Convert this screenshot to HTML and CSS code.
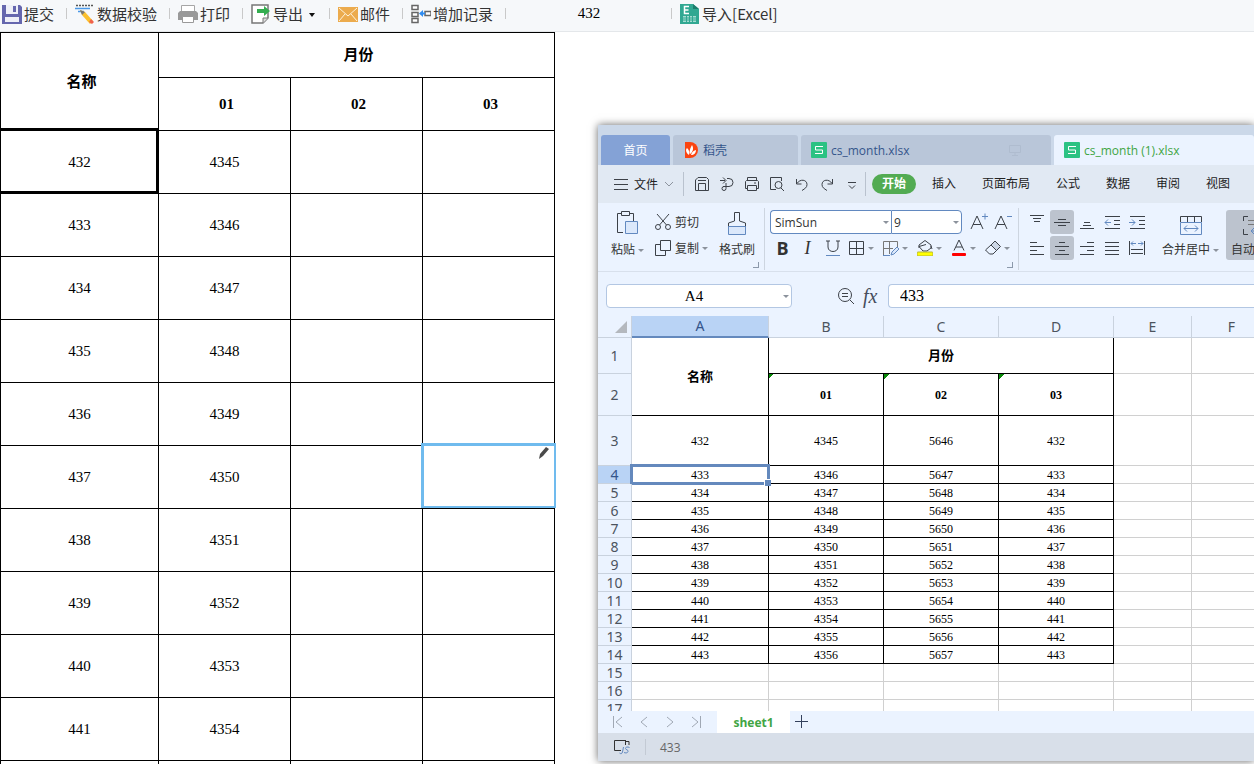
FILE: index.html
```html
<!DOCTYPE html>
<html lang="zh-CN">
<head>
    <meta charset="UTF-8">
    <meta name="viewport" content="width=device-width, initial-scale=1.0">
    <title>数据填报</title>
    <link rel="stylesheet" href="styles.css">
</head>
<body>

    <div class="toolbar">
        <button class="tool first">
            <svg width="20" height="20" viewBox="0 0 20 20"><path d="M0 1h18l2 2v17H0z" fill="#6567ae"/><path d="M4 1h12v9H4z" fill="#eef0f8"/><path d="M11 2h3v6h-3z" fill="#6567ae"/><path d="M3 13h14v5H3z" fill="#eef0f8"/></svg>
            提交
        </button>
        <button class="tool">
            <svg width="20" height="20" viewBox="0 0 20 20"><path d="M1 1.500h18" stroke="#555" stroke-width="1.500" stroke-dasharray="2 1"/><path d="M0 4.500h15M3 7.500h6" stroke="#4a98e8" stroke-width="1.500"/><path d="M5 6l5 2 8 9-3 3-8-9z" fill="#fbc02d"/><path d="M5 6l5 2-3 3z" fill="#777"/><path d="M16 15l3 3-2 2-3-2z" fill="#f0624d"/></svg>
            数据校验
        </button>
        <button class="tool">
            <svg width="20" height="20" viewBox="0 0 20 20"><path d="M3.500 8V1.500h13V8" fill="#fff" stroke="#a6a6a6"/><path d="M2 7h16l2 2v7H0V9z" fill="#999"/><path d="M4.500 12.500h11v6h-11z" fill="#fff" stroke="#999"/></svg>
            打印
        </button>
        <button class="tool">
            <svg width="20" height="20" viewBox="0 0 20 20"><path d="M1 1h16v13l-5 5H1z" fill="#fff" stroke="#777" stroke-width="1.500"/><path d="M12 19v-5h5" fill="#ddd" stroke="#777"/><path d="M6 5h7V2l6 5-6 5V9H6z" fill="#34ad50"/></svg>
            导出
            <span class="caret"></span>
        </button>
        <button class="tool">
            <svg width="20" height="20" viewBox="0 0 20 20"><path d="M0 3h20v15H0z" fill="#ecab4d"/><path d="M1 4l9 8 9-8M1 17l6-7M19 17l-6-7" fill="none" stroke="#fff3dc"/></svg>
            邮件
        </button>
        <button class="tool">
            <svg width="20" height="20" viewBox="0 0 20 20"><path d="M1 1.500h6v4H1zM1 8.500h6v4H1zM1 14.500h6v4H1zM14 7.500h6v4h-6z" fill="#fff" stroke="#666" stroke-width="1.500"/><path d="M14 9.500H10" stroke="#2f8cf0" stroke-width="2"/><path d="M12 6v7L8 9.500z" fill="#2f8cf0"/></svg>
            增加记录
        </button>
        <input class="tool-input" type="text" value="432" aria-label="名称">
        <button class="tool last">
            <svg width="20" height="20" viewBox="0 0 20 20"><path d="M0 0h13l6 5v15H0z" fill="#31a892"/><path d="M13 0l6 5h-6z" fill="#1c7d6c"/><path d="M9 2.500H4.500v7H9M4.500 6H8.500" fill="none" stroke="#fff" stroke-width="1.500"/><path d="M3 12h13v6H3z" fill="#a5dcd1"/><path d="M3 14h13M3 16h13M6.500 12v6M9.500 12v6M12.500 12v6" stroke="#31a892"/></svg>
            导入[Excel]
        </button>
    </div>

    <div class="main">
        <!-- report form -->
        <table class="report">
            <colgroup><col class="name-col"><col><col><col></colgroup>
            <tr class="month-row"><th rowspan="2">名称</th><th colspan="3">月份</th></tr>
            <tr class="no-row"><th>01</th><th>02</th><th>03</th></tr>
            <tr><td class="current">432</td><td>4345</td><td></td><td></td></tr>
            <tr><td>433</td><td>4346</td><td></td><td></td></tr>
            <tr><td>434</td><td>4347</td><td></td><td></td></tr>
            <tr><td>435</td><td>4348</td><td></td><td></td></tr>
            <tr><td>436</td><td>4349</td><td></td><td></td></tr>
            <tr><td>437</td><td>4350</td><td></td><td class="hovered"><svg class="pencil" width="12" height="14" viewBox="0 0 12 14"><path d="M1 13l1-5 6-7 3 2-6 7z" fill="#4a4a4a"/></svg></td></tr>
            <tr><td>438</td><td>4351</td><td></td><td></td></tr>
            <tr><td>439</td><td>4352</td><td></td><td></td></tr>
            <tr><td>440</td><td>4353</td><td></td><td></td></tr>
            <tr><td>441</td><td>4354</td><td></td><td></td></tr>
            <tr><td></td><td></td><td></td><td></td></tr>
        </table>

        <!-- spreadsheet window -->
        <div class="window">
            <div class="titlebar">
                <button class="tab home">首页</button>
                <button class="tab docer">
                    <svg width="16" height="16" viewBox="0 0 16 16"><path d="M2 0h5a8 8 0 0 1 0 16H2z" fill="#fb4410"/><path d="M6 13C2 10 3 7 4 6c2 2 3 4 2 7zM7 12C6 8 8 5 9 3c2 3 1 7-2 9zM8 13c1-3 2-4 5-5 0 3-2 5-5 5z" fill="#fff"/></svg>
                    稻壳
                </button>
                <button class="tab file">
                    <svg width="16" height="16" viewBox="0 0 16 16"><rect width="16" height="16" rx="1" fill="#2bc283"/><path class="logo-s" d="M12 4.500H4.500V8h7v3.500H4"/></svg>
                    cs_month.xlsx
                    <svg class="screen" width="12" height="12" viewBox="0 0 12 12"><path d="M.5 1.500h11v7H.5zM6 9v2M3 11.500h6"/></svg>
                </button>
                <button class="tab active">
                    <svg width="16" height="16" viewBox="0 0 16 16"><rect width="16" height="16" rx="1" fill="#2bc283"/><path class="logo-s" d="M12 4.500H4.500V8h7v3.500H4"/></svg>
                    cs_month (1).xlsx
                </button>
            </div>

            <div class="menubar">
                <button class="file-menu">
                    <svg width="14" height="12" viewBox="0 0 14 12"><path d="M0 1.500h14M0 6.500h14M0 11.500h14"/></svg>
                    文件
                    <svg class="soft" width="10" height="6" viewBox="0 0 10 6"><path d="M1 1l4 4 4-4"/></svg>
                </button>
                <div class="quick">
                    <button aria-label="保存"><svg width="16" height="16" viewBox="0 0 16 16"><path d="M4 1.500h8.500l2 2V14.500h-13V4zM4.500 14V7.500h7V14M4 4.500h8"/></svg></button>
                    <button aria-label="输出"><svg width="16" height="16" viewBox="0 0 16 16"><path d="M1 4.500h5M4 1.500l3 3-3 3M8 2.500h2a4 4 0 0 1 0 8H4M7 7v5.500a2 2 0 0 1-4 0 2 2 0 0 1 2-2"/></svg></button>
                    <button aria-label="打印"><svg width="16" height="16" viewBox="0 0 16 16"><path d="M3.500 5V1.500h9V5M3.500 12.500h-2v-7l1-1h11l1 1v7h-2M3.500 9.500h9v5h-9zM10 7h2"/></svg></button>
                    <button aria-label="预览"><svg width="16" height="16" viewBox="0 0 16 16"><path d="M7 13.500H1.500v-12h11V5M12 12l3 3"/><circle cx="9.500" cy="9" r="3.500"/></svg></button>
                    <button aria-label="撤销"><svg width="16" height="16" viewBox="0 0 16 16"><path d="M2.500 3v5h5M3 7.500c3-5 10-4 10 1 0 3-2 4-5 6"/></svg></button>
                    <button aria-label="恢复"><svg width="16" height="16" viewBox="0 0 16 16"><path d="M13.500 3v5h-5M13 7.500c-3-5-10-4-10 1 0 3 2 4 5 6"/></svg></button>
                    <button aria-label="更多"><svg width="16" height="16" viewBox="0 0 16 16"><path d="M4 6.500h8M5 9.500l3 3 3-3"/></svg></button>
                </div>
                <nav class="menus">
                    <a class="start" href="#">开始</a>
                    <a href="#">插入</a>
                    <a href="#">页面布局</a>
                    <a href="#">公式</a>
                    <a href="#">数据</a>
                    <a href="#">审阅</a>
                    <a href="#">视图</a>
                </nav>
            </div>

            <div class="ribbon">
                <div class="group clipboard">
                    <button class="big">
                        <svg width="24" height="26" viewBox="0 0 24 26"><path d="M7 22.500H1.500v-19H5M13 3.500h4.500V11M5.500 1.500h8v4h-8z"/><path d="M9.500 11.500h12v12h-12z" fill="#dbe8fb" stroke="#6289c0"/></svg>
                        <span class="label">粘贴<i class="arrow"></i></span>
                    </button>
                    <div class="stack">
                        <button class="small"><svg width="16" height="16" viewBox="0 0 16 16"><path d="M2 0l9.500 11M14 0L4.500 11"/><circle cx="3" cy="13" r="2.500"/><circle cx="13" cy="13" r="2.500"/></svg>剪切</button>
                        <button class="small"><svg width="16" height="16" viewBox="0 0 16 16"><path d="M5.500.500h10v10h-10zM5 4.500H.500v11h10V11"/></svg>复制<i class="arrow"></i></button>
                    </div>
                    <button class="big">
                        <svg width="24" height="26" viewBox="0 0 24 26"><path d="M3.500 17v-4l6-2v-8.500h5V11l6 2v4"/><path d="M3.500 16.500h17v8h-17z" fill="#dbe8fb" stroke="#6289c0"/></svg>
                        <span class="label">格式刷</span>
                    </button>
                </div>
                <div class="group font">
                    <div class="font-row">
                        <span class="combo family"><select aria-label="字体"><option>SimSun</option></select></span>
                        <span class="combo size"><select aria-label="字号"><option>9</option></select></span>
                        <button aria-label="增大字号"><svg width="18" height="18" viewBox="0 0 18 18"><path d="M1 16L7 3l6 13M3 11.500h8"/><path d="M12 3.500h6M15 .500v6" stroke="#6289c0"/></svg></button>
                        <button aria-label="减小字号"><svg width="18" height="18" viewBox="0 0 18 18"><path d="M1 16L7 3l6 13M3 11.500h8"/><path d="M13 3.500h5" stroke="#6289c0"/></svg></button>
                    </div>
                    <div class="font-row">
                        <button class="fmt bold">B</button>
                        <button class="fmt italic">I</button>
                        <button class="fmt" aria-label="下划线"><svg width="16" height="16" viewBox="0 0 16 16"><path d="M1 1h4M11 1h4M3 1v6c0 6 10 6 10 0V1"/><path d="M1 15.500h14" stroke="#6289c0"/></svg></button>
                        <button class="drop" aria-label="边框"><svg width="16" height="16" viewBox="0 0 16 16"><path d="M.500 1.500h14v13H.500zM7.500 1.500v13M.500 8.500h14"/></svg><i class="arrow"></i></button>
                        <button class="drop" aria-label="绘图边框"><svg width="16" height="16" viewBox="0 0 16 16"><path d="M.500 15V1.500h14V7M1 8.500h9M6.500 1.500V14" stroke="#777"/><path d="M8 15l1-3 5-5 2 2-5 5zM0 15.500h7" fill="#dbe8fb" stroke="#6289c0"/></svg><i class="arrow"></i></button>
                        <button class="drop" aria-label="填充颜色"><svg width="16" height="16" viewBox="0 0 16 16"><path d="M2 8V5l6-4.500 6 4.500v3l-4 3H6L2 6.500l7-2M14 6l1 3"/><rect x="0" y="12" width="16" height="4" rx="1" fill="#ff0" stroke="#b5b53c"/></svg><i class="arrow"></i></button>
                        <button class="drop" aria-label="字体颜色"><svg width="16" height="16" viewBox="0 0 16 16"><path d="M3 10.500L8 0l5 10.500M5 7h6"/><rect x="1" y="13" width="14" height="3" rx="1" fill="#f00" stroke="none"/></svg><i class="arrow"></i></button>
                        <button class="drop" aria-label="清除"><svg width="16" height="16" viewBox="0 0 16 16"><path d="M6 5l4-4 5.500 5.500-4 4z" fill="#ccd6e5"/><path d="M6 5L.500 10l4 4h3.500l3.500-3.500M6 5l5.500 5.500"/></svg><i class="arrow"></i></button>
                    </div>
                </div>
                <div class="group align">
                    <div class="align-grid">
                        <button aria-label="顶端对齐"><svg width="16" height="16" viewBox="0 0 16 16"><path d="M1 1.500h14M4 4.500h8M5 7.500h6"/></svg></button>
                        <button class="on" aria-label="垂直居中"><svg width="16" height="16" viewBox="0 0 16 16"><path d="M4 5.500h8M0 8.500h16M4 11.500h8"/></svg></button>
                        <button aria-label="底端对齐"><svg width="16" height="16" viewBox="0 0 16 16"><path d="M5 8.500h6M4 11.500h8M1 14.500h14"/></svg></button>
                        <button aria-label="减少缩进"><svg width="16" height="16" viewBox="0 0 16 16"><path d="M1 2.500h15M10 6.500h6M10 10.500h6M1 14.500h15"/><path d="M7 8.500H1M4 5.500l-3 3 3 3" stroke="#6289c0"/></svg></button>
                        <button aria-label="增加缩进"><svg width="16" height="16" viewBox="0 0 16 16"><path d="M1 2.500h15M10 6.500h6M10 10.500h6M1 14.500h15"/><path d="M0 8.500h6M3 5.500l3 3-3 3" stroke="#6289c0"/></svg></button>
                        <button aria-label="左对齐"><svg width="16" height="16" viewBox="0 0 16 16"><path d="M1 2.500h7M1 6.500h14M1 10.500h7M1 14.500h14"/></svg></button>
                        <button class="on" aria-label="水平居中"><svg width="16" height="16" viewBox="0 0 16 16"><path d="M5 2.500h6M1 6.500h14M5 10.500h6M1 14.500h14"/></svg></button>
                        <button aria-label="右对齐"><svg width="16" height="16" viewBox="0 0 16 16"><path d="M8 2.500h7M1 6.500h14M8 10.500h7M1 14.500h14"/></svg></button>
                        <button aria-label="两端对齐"><svg width="16" height="16" viewBox="0 0 16 16"><path d="M1 2.500h14M1 6.500h14M1 10.500h14M1 14.500h14"/></svg></button>
                        <button aria-label="分散对齐"><svg width="16" height="16" viewBox="0 0 16 16"><path d="M.500 1v14M15.500 1v14M2 9.500h12M2 13.500h12"/><path d="M7 3.500H2M4 1.500l-2 2 2 2M9 3.500h5M12 1.500l2 2-2 2" stroke="#6289c0"/></svg></button>
                    </div>
                    <button class="big merge">
                        <svg width="24" height="26" viewBox="0 0 24 26"><path d="M1.500 12V6.500h21V12M8.500 6.500v6M15.500 6.500v6"/><path d="M1.500 12.500h21v12h-21zM5 18.500h14M8 15.500l-3 3 3 3M16 15.500l3 3-3 3" stroke="#6289c0"/></svg>
                        <span class="label">合并居中<i class="arrow"></i></span>
                    </button>
                    <button class="big wrap on">
                        <svg width="24" height="26" viewBox="0 0 24 26"><path d="M5 6.500H.500V11M18 6.500h4.500V11M.500 19v5.500H5M22.500 19v5.500H18"/><path d="M5 10.500h13M5 14.500h13" stroke="#777"/><path d="M18 18v3h-9M11 18l-3 3 3 3" stroke="#6289c0"/></svg>
                        <span class="label">自动换行</span>
                    </button>
                </div>
            </div>

            <div class="formula">
                <span class="combo name-box"><input type="text" value="A4" aria-label="名称框"></span>
                <svg width="18" height="18" viewBox="0 0 18 18"><circle cx="8" cy="8" r="6.500"/><path d="M5 6.500h6M5 9.500h6M13 13l4 4"/></svg>
                <em class="fx">fx</em>
                <input class="formula-input" type="text" value="433" aria-label="编辑栏">
            </div>

            <div class="sheet">
                <table class="grid">
                    <colgroup><col class="c-head"><col class="c-a"><col class="c-m"><col class="c-m"><col class="c-m"><col class="c-e"><col class="c-f"></colgroup>
                    <tr class="letters"><th class="corner"></th><th class="sel">A</th><th>B</th><th>C</th><th>D</th><th>E</th><th>F</th></tr>
                    <tr class="r1 data"><th>1</th><td rowspan="2" class="title">名称</td><td colspan="3" class="title">月份</td><td></td><td></td></tr>
                    <tr class="r2 data"><th>2</th><td class="text">01</td><td class="text">02</td><td class="text">03</td><td></td><td></td></tr>
                    <tr class="r3 data"><th>3</th><td>432</td><td>4345</td><td>5646</td><td>432</td><td></td><td></td></tr>
                    <tr class="data"><th class="sel">4</th><td class="cursor">433</td><td>4346</td><td>5647</td><td>433</td><td></td><td></td></tr>
                    <tr class="data"><th>5</th><td>434</td><td>4347</td><td>5648</td><td>434</td><td></td><td></td></tr>
                    <tr class="data"><th>6</th><td>435</td><td>4348</td><td>5649</td><td>435</td><td></td><td></td></tr>
                    <tr class="data"><th>7</th><td>436</td><td>4349</td><td>5650</td><td>436</td><td></td><td></td></tr>
                    <tr class="data"><th>8</th><td>437</td><td>4350</td><td>5651</td><td>437</td><td></td><td></td></tr>
                    <tr class="data"><th>9</th><td>438</td><td>4351</td><td>5652</td><td>438</td><td></td><td></td></tr>
                    <tr class="data"><th>10</th><td>439</td><td>4352</td><td>5653</td><td>439</td><td></td><td></td></tr>
                    <tr class="data"><th>11</th><td>440</td><td>4353</td><td>5654</td><td>440</td><td></td><td></td></tr>
                    <tr class="data"><th>12</th><td>441</td><td>4354</td><td>5655</td><td>441</td><td></td><td></td></tr>
                    <tr class="data"><th>13</th><td>442</td><td>4355</td><td>5656</td><td>442</td><td></td><td></td></tr>
                    <tr class="data"><th>14</th><td>443</td><td>4356</td><td>5657</td><td>443</td><td></td><td></td></tr>
                    <tr><th>15</th><td></td><td></td><td></td><td></td><td></td><td></td></tr>
                    <tr><th>16</th><td></td><td></td><td></td><td></td><td></td><td></td></tr>
                    <tr><th>17</th><td></td><td></td><td></td><td></td><td></td><td></td></tr>
                </table>
            </div>

            <div class="sheet-tabs">
                <button aria-label="第一个"><svg width="12" height="12" viewBox="0 0 12 12"><path d="M1.500 0v12M10 1L4 6l6 5"/></svg></button>
                <button aria-label="上一个"><svg width="12" height="12" viewBox="0 0 12 12"><path d="M9 1L3 6l6 5"/></svg></button>
                <button aria-label="下一个"><svg width="12" height="12" viewBox="0 0 12 12"><path d="M3 1l6 5-6 5"/></svg></button>
                <button aria-label="最后一个"><svg width="12" height="12" viewBox="0 0 12 12"><path d="M10.500 0v12M2 1l6 5-6 5"/></svg></button>
                <button class="sheet-tab">sheet1</button>
                <button class="add" aria-label="新建工作表"><svg width="14" height="14" viewBox="0 0 14 14"><path d="M6.500 0v13M0 6.500h13"/></svg></button>
            </div>

            <div class="status">
                <span class="macro"><svg width="18" height="16" viewBox="0 0 18 16"><path d="M8 11.500H1.500v-10H12M12.500 6V1M12.500 2.500h3.500V6" stroke="#333"/><path d="M10.500 8l-1 5c-.5 2-2 2-3 1M16.500 8.500c-2-1-4-.5-4 1s3 1 2.500 3-3 1.500-4 1" stroke="#6289c0"/></svg></span>
                <span class="value">433</span>
            </div>
        </div>
    </div>

</body>
</html>
```
FILE: styles.css
```css
* {
    box-sizing: border-box;
}
body {
    margin: 0;
    height: 100vh;
    display: flex;
    flex-direction: column;
    overflow: hidden;
    background: #fff;
    color: #333;
    font-family: "Open Sans", "Noto Sans CJK SC", sans-serif;
    font-size: 12px;
}
button, input, select {
    font: inherit;
    color: inherit;
    margin: 0;
    padding: 0;
    border: none;
    background: none;
    outline: none;
}
button {
    display: flex;
    align-items: center;
    white-space: nowrap;
    cursor: pointer;
}
svg {
    flex: none;
}

/* top toolbar */
.toolbar {
    flex: none;
    display: flex;
    align-items: center;
    height: 32px;
    padding-bottom: 4px;
    background: #f6f8fa;
    border-bottom: 1px solid #e4e7ea;
    font-family: "Noto Sans CJK SC", sans-serif;
    font-size: 15px;
}
.tool {
    position: relative;
    gap: 2px;
    padding: 0 12px 0 8px;
    height: 24px;
    margin-right: 1px;
}
.tool.first {
    padding-left: 2px;
}
.tool::after, .tool-input {
    background: linear-gradient(#c9c9c9, #c9c9c9) right center / 1px 11px no-repeat;
}
.tool::after {
    content: "";
    position: absolute;
    right: -1px;
    width: 1px;
    height: 11px;
}
.tool.last::after {
    display: none;
}
.tool-input {
    width: 166px;
    height: 24px;
    text-align: center;
    color: #000;
    font-family: "Liberation Serif", serif;
}
.caret {
    margin: 2px 0 0 4px;
    border: 3px solid transparent;
    border-top: 4px solid #111;
    border-bottom: none;
    margin-right: 2px;
}

.main {
    flex: 1;
    min-height: 0;
    display: flex;
    align-items: flex-start;
    overflow: hidden;
}

/* report */
.report {
    flex: none;
    width: 555px;
    table-layout: fixed;
    border-collapse: separate;
    border-spacing: 0;
    border: 1px solid #000;
    border-width: 1px 0 0 1px;
    color: #000;
    font-family: "Liberation Serif", "Noto Sans CJK SC", serif;
    font-size: 15px;
    line-height: 20px;
    text-align: center;
}
.report .name-col {
    width: 158px;
}
.report td, .report th {
    position: relative;
    height: 63px;
    padding: 0;
    border: 1px solid #000;
    border-width: 0 1px 1px 0;
}
.report th {
    padding-left: 4px;
}
.report .month-row th {
    height: 45px;
}
.report .no-row th {
    height: 53px;
}
.report .current::after, .report .hovered::after {
    content: "";
    position: absolute;
    top: -3px;
    right: -1px;
    bottom: -1px;
    left: -1px;
    border: 3px solid #000;
    border-left-width: 1px;
}
.report .hovered::after {
    right: -2px;
    left: -2px;
    border: 3px solid #70bbee;
    border-width: 3px 2px 2px 3px;
    bottom: 0;
}
.pencil {
    position: absolute;
    top: 0;
    right: 4px;
}

/* window */
.window {
    flex: 1;
    min-width: 0;
    align-self: stretch;
    display: flex;
    flex-direction: column;
    margin: 93px 0 3px 43px;
    background: #ebf3ff;
    box-shadow: 0 0 8px rgba(0, 0, 0, 0.6);
}
.window svg {
    fill: none;
    stroke: #3c4148;
}
.window .titlebar svg {
    stroke: none;
}
.logo-s {
    stroke: #fff;
    stroke-linejoin: round;
}
.titlebar {
    flex: none;
    display: flex;
    align-items: flex-end;
    gap: 3px;
    height: 40px;
    padding-left: 3px;
    background: #cbd8e9;
}
.tab {
    flex: none;
    gap: 4px;
    height: 30px;
    padding-left: 10px;
    border-radius: 3px 3px 0 0;
    background: #b9c6d9;
    color: #34558b;
}
.tab.home {
    width: 69px;
    padding: 0;
    justify-content: center;
    background: #84a2d6;
    color: #fff;
}
.tab.docer {
    width: 125px;
}
.tab.file {
    width: 250px;
}
.tab .screen {
    margin: 0 30px 0 auto;
}
.screen path {
    stroke: #afbccf;
}
.tab.active {
    flex: 1;
    background: #ebf3ff;
    color: #41a544;
}

.menubar {
    flex: none;
    display: flex;
    align-items: center;
    height: 38px;
    padding-left: 16px;
    background: #e1e9f3;
    color: #222;
    overflow: hidden;
}
.file-menu {
    gap: 6px;
    padding-right: 9px;
}
.window .soft {
    stroke: #8d949e;
}
.quick {
    display: flex;
    height: 24px;
    padding: 0 1px 0 5px;
    border: 1px solid #b9c2ce;
    border-width: 0 1px;
}
.quick button {
    width: 25px;
    justify-content: center;
}
.menus {
    display: flex;
    align-items: center;
    gap: 26px;
    padding-left: 16px;
    white-space: nowrap;
    line-height: 20px;
}
.menus a {
    color: inherit;
    text-decoration: none;
}
.menus .start {
    margin: 0 -10px;
    padding: 0 10px;
    border-radius: 10px;
    background: #52ab52;
    color: #fff;
    font-weight: bold;
}

.ribbon {
    flex: none;
    display: flex;
    height: 69px;
    padding-top: 5px;
    overflow: hidden;
    border-bottom: 1px solid #d8e0ec;
}
.group {
    position: relative;
    flex: none;
    display: flex;
    height: 62px;
    padding-top: 2px;
    border-right: 1px solid #cdd5e0;
}
.group.align {
    border: none;
    padding-left: 6px;
}
.clipboard::after, .font::after {
    content: "";
    position: absolute;
    right: 5px;
    bottom: 2px;
    width: 5px;
    height: 5px;
    border: 1px solid #8c99ab;
    border-width: 0 1px 1px 0;
}
.clipboard {
    width: 167px;
    padding-left: 13px;
    gap: 11px;
}
.arrow {
    flex: none;
    margin-left: 3px;
    border: 3px solid transparent;
    border-top-color: #8b929c;
    border-bottom: none;
}
.big {
    flex-direction: column;
    gap: 5px;
    height: 50px;
}
.label {
    display: flex;
    align-items: center;
    line-height: 18px;
}
.stack {
    display: grid;
    grid-template-rows: 24px 24px;
    gap: 2px;
}
.small {
    gap: 4px;
}
.small .arrow {
    margin-left: -1px;
}
.font {
    width: 254px;
    padding-left: 5px;
    flex-direction: column;
    gap: 2px;
}
.font-row {
    display: flex;
    height: 24px;
}
.font-row button {
    width: 24px;
    justify-content: center;
}
.font-row .combo + button {
    margin-left: 5px;
}
.font-row .fmt {
    width: 25px;
    font-size: 18px;
}
.font-row .bold {
    font-weight: bold;
}
.font-row .italic {
    font-family: "Liberation Serif", serif;
    font-style: italic;
}
.font-row .drop {
    width: 34px;
    justify-content: flex-start;
    padding-left: 4px;
}
.combo {
    position: relative;
    flex: none;
    display: flex;
    height: 24px;
    border: 1px solid #6289c0;
    background: #fff;
}
.combo::after {
    content: "";
    position: absolute;
    top: 10px;
    right: 2px;
    border: 3px solid transparent;
    border-top-color: #8b929c;
    border-bottom: none;
    pointer-events: none;
}
.combo select {
    width: 100%;
    appearance: none;
    padding-left: 4px;
}
.family {
    width: 121px;
    border-right: none;
    border-radius: 4px 0 0 4px;
}
.size {
    width: 71px;
    border-radius: 0 4px 4px 0;
}
.size select {
    padding-left: 2px;
}
.align-grid {
    display: grid;
    grid-template-columns: repeat(5, 24px);
    grid-template-rows: 24px 24px;
    gap: 2px 1px;
}
.align-grid button {
    justify-content: center;
}
.on {
    border-radius: 3px;
    background: #bcc3ce;
}
.merge {
    margin-left: 13px;
}
.wrap {
    margin-left: 7px;
    padding: 0 5px;
}

.formula {
    flex: none;
    display: flex;
    align-items: center;
    height: 44px;
    padding: 4px 0 0 8px;
}
.formula > svg {
    margin: 0 8px 0 45px;
}
.name-box {
    width: 186px;
    border-color: #b3c7e3;
    border-radius: 4px;
}
.name-box input {
    width: 100%;
    padding-right: 10px;
    text-align: center;
    color: #000;
    font-family: "Liberation Serif", serif;
    font-size: 15px;
}
.fx {
    width: 25px;
    color: #454d5c;
    font-family: "Liberation Serif", serif;
    font-size: 20px;
    line-height: 20px;
}
.formula-input {
    flex: 1;
    min-width: 0;
    height: 24px;
    padding-left: 11px;
    border: 1px solid #b3c7e3;
    border-right: none;
    border-radius: 4px 0 0 4px;
    background: #fff;
    color: #000;
    font-family: "Liberation Serif", serif;
    font-size: 16px;
}

/* cells */
.sheet {
    flex: 1;
    min-height: 0;
    overflow: hidden;
    background: #fff;
}
.grid {
    width: 674px;
    table-layout: fixed;
    border-collapse: separate;
    border-spacing: 0;
    text-align: center;
}
.c-head {
    width: 34px;
}
.c-a {
    width: 137px;
}
.c-m {
    width: 115px;
}
.c-e {
    width: 78px;
}
.c-f {
    width: 80px;
}
.grid th, .grid td {
    position: relative;
    height: 18px;
    padding: 0;
    border: 1px solid #d0d0d0;
    border-width: 0 1px 1px 0;
    line-height: 16px;
}
.grid th {
    background: #ebf3ff;
    border-color: #c9d2de;
    color: #4c535e;
    font-family: "Noto Sans", sans-serif;
    font-size: 14px;
    font-weight: normal;
}
.grid td {
    color: #000;
    font-family: "Liberation Serif", "Noto Sans CJK SC", serif;
}
.grid .letters th {
    height: 22px;
}
.grid .r1 > * {
    height: 36px;
}
.grid .r2 > * {
    height: 42px;
}
.grid .r3 > * {
    height: 50px;
}
.data td:not(:nth-last-child(-n+2)) {
    border-color: #000;
}
.grid .sel {
    background: #b9d3f5;
    color: #34558b;
}
.grid .letters .sel {
    border-bottom: 2px solid #6489bd;
}
.grid .title {
    font-size: 13px;
    font-weight: bold;
}
.grid .text {
    font-weight: bold;
}
.text::before {
    content: "";
    position: absolute;
    top: 0;
    left: 0;
    width: 5px;
    height: 5px;
    background: linear-gradient(135deg, #0a8a0a 50%, transparent 50%);
}
.corner::after {
    content: "";
    position: absolute;
    right: 4px;
    bottom: 4px;
    border: 6px solid #b4b8be;
    border-top-color: transparent;
    border-left-color: transparent;
}
.cursor::before {
    content: "";
    position: absolute;
    top: -2px;
    right: -2px;
    bottom: -2px;
    left: -2px;
    border: 3px solid #6489bd;
}
.cursor::after {
    content: "";
    position: absolute;
    z-index: 1;
    right: -3px;
    bottom: -3px;
    width: 6px;
    height: 6px;
    border: 1px solid #fff;
    border-width: 1px 0 0 1px;
    background: #6489bd;
}

.sheet-tabs {
    flex: none;
    display: flex;
    height: 22px;
    padding-left: 7px;
}
.sheet-tabs button {
    width: 26px;
    justify-content: center;
}
.sheet-tabs svg {
    stroke: #a0a8b4;
}
.sheet-tabs .sheet-tab {
    width: 73px;
    margin-left: 8px;
    background: #fff;
    color: #41a544;
    font-weight: bold;
}
.sheet-tabs .add {
    width: 24px;
}
.sheet-tabs .add svg {
    stroke: #33405c;
}
.status {
    flex: none;
    display: flex;
    align-items: center;
    height: 28px;
    background: #d8dfe9;
    color: #666;
}
.macro {
    display: flex;
    width: 48px;
    padding-left: 15px;
    border-right: 1px solid #c3cad4;
}
.value {
    padding-left: 14px;
}
```
